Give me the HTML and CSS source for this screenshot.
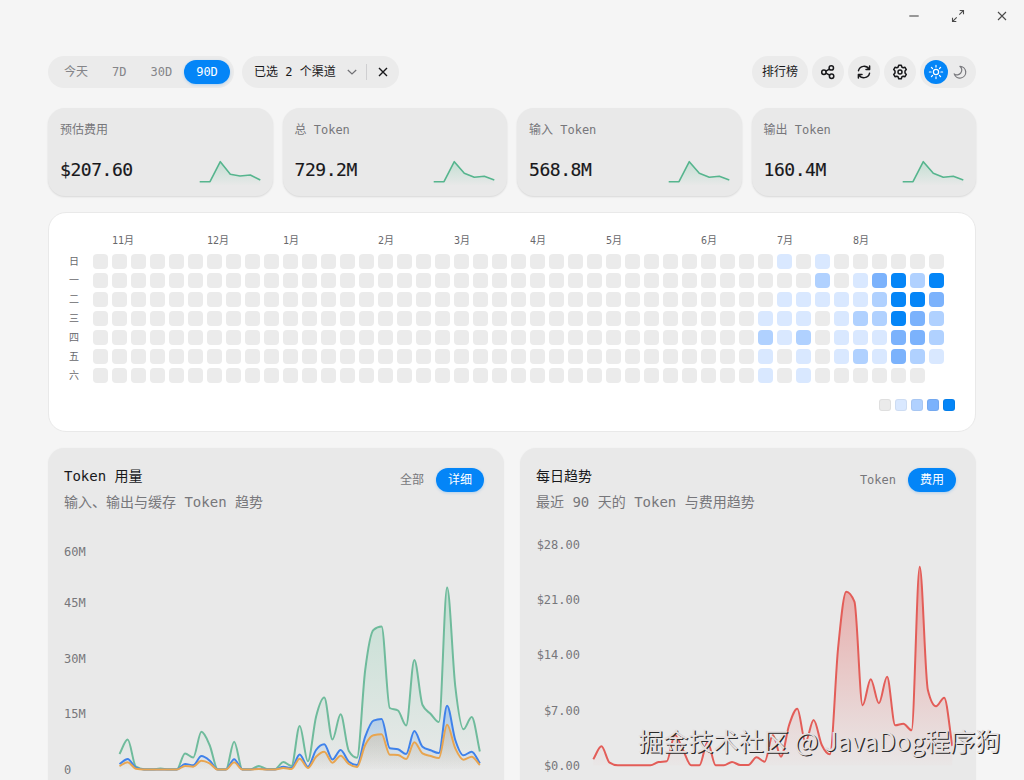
FILE: index.html
```html
<!DOCTYPE html>
<html lang="zh-CN">
<head>
<meta charset="utf-8">
<title>Token 用量</title>
<link rel="stylesheet" href="styles.css">
</head>
<body>
<div class="window">
  <div class="titlebar">
    <span class="win-btn"><svg width="12" height="12" viewBox="0 0 12 12"><path d="M1.3 6h9.4"/></svg></span>
    <span class="win-btn"><svg width="14" height="14" viewBox="0 0 14 14"><path d="M8.3 5.7l4-4M8.7 1.5h3.8v3.8M5.7 8.3l-4 4M1.5 8.7v3.8h3.8"/></svg></span>
    <span class="win-btn"><svg width="12" height="12" viewBox="0 0 12 12"><path d="M2 2l8 8M10 2l-8 8"/></svg></span>
  </div>
  <main class="content">
    <header class="toolbar">
      <div class="pill ranges">
        <span class="range">今天</span><span class="range">7D</span><span class="range">30D</span><span class="range active">90D</span>
      </div>
      <div class="pill channel">
        <span class="channel-text">已选 2 个渠道</span>
        <svg class="chevron" width="12" height="12" viewBox="0 0 12 12"><path d="M1.8 4l4.2 4 4.2-4"/></svg>
        <i class="divider"></i>
        <svg class="clear" width="12" height="12" viewBox="0 0 12 12"><path d="M2 2l8 8M10 2l-8 8"/></svg>
      </div>
      <div class="actions">
        <span class="pill rank">排行榜</span>
        <span class="pill round"><svg width="16" height="16" viewBox="0 0 16 16"><circle cx="3.9" cy="8.2" r="2.2"/><circle cx="11.3" cy="3.9" r="2.2"/><circle cx="11.6" cy="12.2" r="2.2"/><path d="M5.9 7.2l3.5-2.1M5.9 9.2l3.7 2"/></svg></span>
        <span class="pill round"><svg width="16" height="16" viewBox="0 0 16 16"><path d="M2.5 6.7A5.7 5.7 0 0 1 13 5.2M13.6 1.9v3.6H10M13.5 9.3A5.7 5.7 0 0 1 3 10.8M2.4 14.1v-3.6H6"/></svg></span>
        <span class="pill round"><svg width="16" height="16" viewBox="0 0 16 16"><path d="M6.7 1.2h2.6l.5 1.8 1.4.8 1.8-.5 1.3 2.3L13 7v2l1.3 1.4-1.3 2.3-1.8-.5-1.4.8-.5 1.8H6.7L6.2 13l-1.4-.8-1.8.5-1.3-2.3L3 9V7L1.7 5.6 3 3.3l1.8.5L6.2 3z"/><circle cx="8" cy="8" r="2"/></svg></span>
        <div class="pill theme">
          <span class="mode on"><svg width="16" height="16" viewBox="0 0 16 16"><circle cx="8" cy="8" r="2.6"/><path d="M8 1.4v1.7M8 12.9v1.7M1.4 8h1.7M12.9 8h1.7M3.4 3.4l1.1 1.1M11.5 11.5l1.1 1.1M3.4 12.6l1.1-1.1M11.5 4.5l1.1-1.1"/></svg></span>
          <span class="mode"><svg width="16" height="16" viewBox="0 0 16 16"><path d="M7.9 2.3a5.9 5.9 0 1 1-5.7 7.6A4.6 4.6 0 0 0 7.9 2.3z"/></svg></span>
        </div>
      </div>
    </header>

    <section class="stats">
      <article class="stat"><h3>预估费用</h3><div class="stat-row"><b>$207.60</b>
        <svg class="spark" width="62" height="26" viewBox="0 0 62 26"><path class="spark-fill" d="M.7 22.7H11L21.3 2.7l10 12.6L41 17l10.3-1 10 5v5H.7z"/><path class="spark-line" d="M.7 22.7H11L21.3 2.7l10 12.6L41 17l10.3-1 10 5"/></svg></div></article>
      <article class="stat"><h3>总 Token</h3><div class="stat-row"><b>729.2M</b>
        <svg class="spark" width="62" height="26" viewBox="0 0 62 26"><path class="spark-fill" d="M.7 22.7H11L21.3 2.7l10 11.6 10 4 10-1 10 3.7v5H.7z"/><path class="spark-line" d="M.7 22.7H11L21.3 2.7l10 11.6 10 4 10-1 10 3.7"/></svg></div></article>
      <article class="stat"><h3>输入 Token</h3><div class="stat-row"><b>568.8M</b>
        <svg class="spark" width="62" height="26" viewBox="0 0 62 26"><path class="spark-fill" d="M.7 22.7H11L21.3 2.7l10 11.6 10 4 10-1 10 3.7v5H.7z"/><path class="spark-line" d="M.7 22.7H11L21.3 2.7l10 11.6 10 4 10-1 10 3.7"/></svg></div></article>
      <article class="stat"><h3>输出 Token</h3><div class="stat-row"><b>160.4M</b>
        <svg class="spark" width="62" height="26" viewBox="0 0 62 26"><path class="spark-fill" d="M.7 22.7H11L21.3 2.7l10 11.6 10 4 10-1 10 3.7v5H.7z"/><path class="spark-line" d="M.7 22.7H11L21.3 2.7l10 11.6 10 4 10-1 10 3.7"/></svg></div></article>
    </section>

    <section class="heat-card">
      <div class="heatmap" id="heatmap"></div>
      <div class="legend"><i class="l0"></i><i class="l1"></i><i class="l2"></i><i class="l3"></i><i class="l4"></i></div>
    </section>

    <section class="charts">
      <article class="chart-card">
        <div class="chart-head">
          <div><h2>Token 用量</h2><p>输入、输出与缓存 Token 趋势</p></div>
          <div class="tabs"><span>全部</span><span class="active">详细</span></div>
        </div>
        <svg class="plot" id="usage" width="456" height="260" viewBox="48 520 456 260">
          <g class="axis"><text x="64" y="556">60M</text><text x="64" y="607">45M</text><text x="64" y="663">30M</text><text x="64" y="718">15M</text><text x="64" y="774">0</text></g>
        </svg>
      </article>
      <article class="chart-card">
        <div class="chart-head">
          <div><h2>每日趋势</h2><p>最近 90 天的 Token 与费用趋势</p></div>
          <div class="tabs"><span>Token</span><span class="active">费用</span></div>
        </div>
        <svg class="plot" id="trend" width="456" height="260" viewBox="520 520 456 260">
          <g class="axis end"><text x="580" y="549">$28.00</text><text x="580" y="604">$21.00</text><text x="580" y="659">$14.00</text><text x="580" y="715">$7.00</text><text x="580" y="770">$0.00</text></g>
        </svg>
      </article>
    </section>
  </main>
  <div class="watermark">掘金技术社区 @ JavaDog程序狗</div>
</div>
<svg class="defs" width="0" height="0">
  <defs>
    <linearGradient id="g-green" x1="0" y1="0" x2="0" y2="1"><stop offset="0" stop-color="#6cc79f" stop-opacity=".3"/><stop offset="1" stop-color="#6cc79f" stop-opacity=".01"/></linearGradient>
    <linearGradient id="g-blue" x1="0" y1="0" x2="0" y2="1"><stop offset="0" stop-color="#5a9bf5" stop-opacity=".4"/><stop offset="1" stop-color="#5a9bf5" stop-opacity=".01"/></linearGradient>
    <linearGradient id="g-orange" x1="0" y1="0" x2="0" y2="1"><stop offset="0" stop-color="#dcb682" stop-opacity=".36"/><stop offset="1" stop-color="#e8a84c" stop-opacity=".01"/></linearGradient>
    <linearGradient id="g-red" x1="0" y1="0" x2="0" y2="1"><stop offset="0" stop-color="#e5605c" stop-opacity=".48"/><stop offset="1" stop-color="#e5605c" stop-opacity=".02"/></linearGradient>
  </defs>
</svg>
<script src="app.js"></script>
</body>
</html>
```
FILE: styles.css
```css
* { box-sizing: border-box; }
body {
  margin: 0;
  background: #f5f5f5;
  color: #18181b;
  font-family: "DejaVu Sans Mono", "Noto Sans CJK SC", monospace;
  font-size: 12px;
  line-height: 16px;
}
h2, h3, p { margin: 0; font-weight: 400; }
svg { display: block; fill: none; }
.window { position: relative; width: 1024px; height: 780px; overflow: hidden; }

.titlebar { display: flex; justify-content: flex-end; height: 32px; }
.win-btn { display: grid; place-items: center; width: 44px; height: 32px; }
.win-btn svg { stroke: #4a4a4a; stroke-width: 1.1; }

.content { padding: 24px 48px 0; }
.toolbar { display: flex; align-items: center; height: 32px; }
.pill {
  display: flex;
  align-items: center;
  height: 32px;
  border-radius: 16px;
  background: #ebebeb;
}
.ranges { width: 186px; padding: 4px; color: #858589; }
.range { height: 24px; padding: 0 12px; line-height: 24px; border-radius: 12px; }
.active { background: #0485f7; color: #fff; box-shadow: 0 1px 3px rgba(4, 133, 247, .25); }
.channel { width: 157px; margin-left: 8px; padding-left: 12px; }
.channel-text { width: 92px; white-space: nowrap; }
.chevron { stroke: #707074; stroke-width: 1.2; }
.divider { width: 1px; height: 16px; margin: 0 10px 0 8px; background: #cfcfd1; }
.clear { stroke: #18181b; stroke-width: 1.4; }
.actions { display: flex; gap: 4px; margin-left: auto; }
.rank { width: 56px; justify-content: center; font-size: 12px; }
.round { width: 32px; justify-content: center; }
.round svg { stroke: #18181b; stroke-width: 1.5; stroke-linejoin: round; stroke-linecap: round; }
.theme { width: 56px; padding: 0 4px; }
.mode { display: grid; place-items: center; width: 24px; height: 24px; border-radius: 12px; }
.mode svg { stroke: #77777b; stroke-width: 1.2; stroke-linecap: round; stroke-linejoin: round; }
.mode.on { background: #0485f7; }
.mode.on svg { stroke: #fff; }

.stats { display: grid; grid-template-columns: repeat(4, 1fr); gap: 10px; margin-top: 20px; }
.stat {
  height: 88px;
  padding: 13px 12px 0;
  border-radius: 17px;
  background: #e9e9e9;
  box-shadow: 0 1px 2px rgba(0, 0, 0, .12);
}
.stat h3 { font-size: 12px; line-height: 18px; color: #77777b; }
.stat-row { display: flex; justify-content: space-between; align-items: flex-start; margin-top: 19px; }
.stat b { font-size: 18px; line-height: 24px; font-weight: 400; letter-spacing: -0.45px; -webkit-text-stroke: .15px #18181b; }
.spark { margin-top: 1px; }
.spark-fill { fill: url(#g-green); }
.spark-line { stroke: #56b58e; stroke-width: 1.6; stroke-linejoin: round; }

.heat-card {
  height: 220px;
  margin-top: 16px;
  padding: 20px 20px 0;
  border: 1px solid #e9e9e9;
  border-radius: 18px;
  background: #fff;
}
.heatmap {
  display: grid;
  grid-template-columns: 20px repeat(45, 15px);
  grid-template-rows: 17px repeat(7, 15px);
  gap: 4px;
}
.month, .day { font-size: 10px; line-height: 15px; color: #68686c; white-space: nowrap; }
.month { width: 0; }
.cell { border-radius: 4px; }
.legend { display: flex; justify-content: flex-end; gap: 4px; margin-top: 16px; }
.legend i { width: 12px; height: 12px; border-radius: 3px; box-shadow: inset 0 0 0 1px rgba(0, 0, 0, .05); }
.l0 { background: #ebebeb; }
.l1 { background: #d9e8ff; }
.l2 { background: #b0d1ff; }
.l3 { background: #7bb2fc; }
.l4 { background: #0485f7; }

.charts { display: grid; grid-template-columns: 1fr 1fr; gap: 16px; margin-top: 16px; }
.chart-card { height: 400px; border-radius: 16px; background: #e9e9e9; box-shadow: 0 0 2px rgba(0, 0, 0, .04); }
.chart-head { display: flex; justify-content: space-between; height: 72px; padding: 16px 20px 0 16px; }
.chart-head h2 { font-size: 14px; line-height: 24px; }
.chart-head p { font-size: 14px; line-height: 28px; color: #77777b; }
.tabs { display: flex; gap: 12px; height: 24px; margin-top: 4px; line-height: 24px; color: #77777b; }
.tabs .active { width: 48px; text-align: center; border-radius: 12px; color: #fff; }
.axis text { font-size: 12px; fill: #77777b; }
.axis.end text { text-anchor: end; }
.line { stroke-width: 2; stroke-linejoin: round; }

.watermark {
  position: absolute;
  left: 638px;
  top: 722px;
  font: 25.15px/36px "Noto Sans CJK SC", sans-serif;
  white-space: nowrap;
  color: #e4dfdf;
  text-shadow: 1.2px 1.2px .6px #2a2a2a;
}
.defs { position: absolute; }
```
FILE: app.js
```js
const SVG = "http://www.w3.org/2000/svg";

// Heatmap: 45 weeks, only the last ten hold activity.
const months = { 1: "11月", 6: "12月", 10: "1月", 15: "2月", 19: "3月", 23: "4月", 27: "5月", 32: "6月", 36: "7月", 40: "8月" };
const days = ["日", "一", "二", "三", "四", "五", "六"];
const recent = ["0101000000", "0002013424", "0111112443", "1110122432", "2120111332", "1010121321", "101000000"];
const map = document.getElementById("heatmap");

function add(cls, col, row, text) {
  const el = document.createElement("span");
  el.className = cls;
  el.style.gridArea = row + " / " + col;
  if (text) el.textContent = text;
  map.appendChild(el);
}
for (const w in months) add("month", Number(w) + 2, 1, months[w]);
days.forEach((d, r) => {
  add("day", 1, r + 2, d);
  ("0".repeat(35) + recent[r]).split("").forEach((l, w) => add("cell l" + l, w + 2, r + 2));
});

// Monotone cubic interpolation through the points.
function curve(xs, ys) {
  const n = xs.length, s = [], m = [];
  for (let i = 0; i < n - 1; i++) s.push((ys[i + 1] - ys[i]) / (xs[i + 1] - xs[i]));
  m.push(s[0]);
  for (let i = 1; i < n - 1; i++) {
    const a = s[i - 1], b = s[i];
    m.push((Math.sign(a) + Math.sign(b)) * Math.min(Math.abs(a), Math.abs(b), Math.abs(a + b) / 4));
  }
  m.push(s[n - 2]);
  let d = `M${xs[0]},${ys[0]}`;
  for (let i = 0; i < n - 1; i++) {
    const h = (xs[i + 1] - xs[i]) / 3;
    d += `C${xs[i] + h},${ys[i] + h * m[i]} ${xs[i + 1] - h},${ys[i + 1] - h * m[i + 1]} ${xs[i + 1]},${ys[i + 1]}`;
  }
  return d;
}
function series(id, x0, step, ys, base, color, grad) {
  const xs = ys.map((_, i) => x0 + i * step);
  const d = curve(xs, ys);
  const fill = document.createElementNS(SVG, "path");
  fill.setAttribute("d", d + `V${base}H${x0}Z`);
  fill.setAttribute("fill", `url(#${grad})`);
  const line = document.createElementNS(SVG, "path");
  line.setAttribute("d", d);
  line.setAttribute("stroke", color);
  line.setAttribute("class", "line");
  document.getElementById(id).append(fill, line);
}
const green = [754, 739.5, 766.7, 769.3, 769.3, 768.6, 769.3, 769.3, 753.5, 757.5, 731.8, 745, 769.3, 769.3, 741.8, 769.3, 769.3, 766, 769, 769, 762, 766, 726, 761.3, 716.7, 697.5, 739.5, 714.3, 751, 757.7, 670, 630, 626.5, 708, 710.5, 725.5, 660, 705, 714, 722, 587.5, 686.5, 729.3, 717, 751.5];
const blue = [764, 759, 767.7, 769.4, 769.4, 769.4, 769.4, 769.4, 764, 765.3, 756, 760.5, 769.4, 769.4, 759.3, 769.4, 769.4, 768.7, 769.4, 769.4, 766.7, 768, 754.5, 766.7, 750, 744.3, 759.5, 750, 761.7, 765, 736.7, 720.7, 719, 748.3, 749.3, 754, 731, 746.7, 750.3, 753, 705.7, 740, 755.3, 751.7, 763.3];
const orange = [766, 762.3, 768.7, 769.5, 769.5, 769.5, 769.5, 769.5, 766, 766.7, 760.7, 763.3, 769.5, 769.5, 762.3, 769.5, 769.5, 769, 769.5, 769.5, 768, 769, 758.7, 768, 756.7, 751.7, 762.7, 755.7, 764, 767, 745, 735.3, 734.3, 754.7, 755, 759, 742.3, 753.3, 756, 758, 724.7, 748.3, 759.7, 756.7, 765];
const red = [759.3, 746.3, 762.7, 765.3, 765.3, 765.3, 765.3, 765.3, 762, 761.3, 735, 750, 765.3, 765.3, 742, 765.3, 765.3, 762, 765, 765, 757.3, 761.7, 735, 756.7, 725, 708.7, 742, 720, 745, 754.3, 648, 591.7, 601.7, 705.3, 679.3, 703.3, 676.7, 725.3, 723.7, 730.3, 566.7, 690, 706.3, 697.7, 746];
series("usage", 119.5, 8.19, green, 769.5, "#6fbb9c", "g-green");
series("usage", 119.5, 8.19, blue, 769.5, "#3f82ea", "g-blue");
series("usage", 119.5, 8.19, orange, 769.5, "#e8a550", "g-orange");
series("trend", 593.3, 8.16, red, 765.5, "#e35d58", "g-red");
```
